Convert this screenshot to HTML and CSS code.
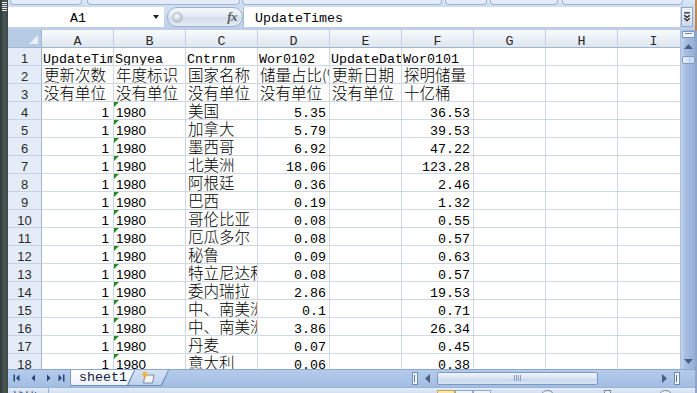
FILE: index.html
```html
<!DOCTYPE html>
<html lang="zh">
<head>
<meta charset="utf-8">
<title>sheet1</title>
<link rel="stylesheet" href="styles.css">
</head>
<body>
<div class="screen">
  <div class="lstrip">
    <svg class="lstrip-icon" width="7" height="11" viewBox="0 0 7 11"><path d="M1 1.5H6M1 3.5H6M1 5.5H6M1 7.5H6M1 9.5H6" stroke="#e8eef0" stroke-width="1"/></svg>
  </div>
  <div class="app">
    <div class="ribbon">
      <span class="grp g1"></span><span class="grp g2"></span><span class="grp g3"></span><span class="grp g4"></span><span class="grp g5"></span><span class="grp g6"></span>
    </div>
    <div class="fbar">
      <div class="namebox"><span class="nb-text">A1</span><span class="nb-arrow"></span></div>
      <div class="fxbtn"><span class="knob"></span><span class="fx">fx</span></div>
      <div class="finput">UpdateTimes</div>
      <div class="fexp"><svg width="11" height="18" viewBox="0 0 11 18"><path d="M2.5 4.5H8.5M2.5 7L5.5 9.5L8.5 7M2.5 10.5L5.5 13L8.5 10.5" fill="none" stroke="#1c1c1c" stroke-width="1.4"/></svg></div>
    </div>
    <div class="main">
      <div class="sheet">
        <div class="corner"></div><div class="ch">A</div><div class="ch">B</div><div class="ch">C</div><div class="ch">D</div><div class="ch">E</div><div class="ch">F</div><div class="ch">G</div><div class="ch">H</div><div class="ch">I</div>

        <div class="rh">1</div><div class="c t">UpdateTimes</div><div class="c t">Sgnyea</div><div class="c t">Cntrnm</div><div class="c t">Wor0102</div><div class="c t">UpdateDate</div><div class="c t">Wor0101</div><div class="c"></div><div class="c"></div><div class="c"></div>

        <div class="rh">2</div><div class="c z">更新次数</div><div class="c z">年度标识</div><div class="c z">国家名称</div><div class="c z">储量占比(%)</div><div class="c z">更新日期</div><div class="c z">探明储量</div><div class="c"></div><div class="c"></div><div class="c"></div>

        <div class="rh">3</div><div class="c z">没有单位</div><div class="c z">没有单位</div><div class="c z">没有单位</div><div class="c z">没有单位</div><div class="c z">没有单位</div><div class="c z">十亿桶</div><div class="c"></div><div class="c"></div><div class="c"></div>

        <div class="rh">4</div><div class="c s r">1</div><div class="c s g">1980</div><div class="c z">美国</div><div class="c n">5.35</div><div class="c"></div><div class="c n">36.53</div><div class="c"></div><div class="c"></div><div class="c"></div>

        <div class="rh">5</div><div class="c s r">1</div><div class="c s g">1980</div><div class="c z">加拿大</div><div class="c n">5.79</div><div class="c"></div><div class="c n">39.53</div><div class="c"></div><div class="c"></div><div class="c"></div>

        <div class="rh">6</div><div class="c s r">1</div><div class="c s g">1980</div><div class="c z">墨西哥</div><div class="c n">6.92</div><div class="c"></div><div class="c n">47.22</div><div class="c"></div><div class="c"></div><div class="c"></div>

        <div class="rh">7</div><div class="c s r">1</div><div class="c s g">1980</div><div class="c z">北美洲</div><div class="c n">18.06</div><div class="c"></div><div class="c n">123.28</div><div class="c"></div><div class="c"></div><div class="c"></div>

        <div class="rh">8</div><div class="c s r">1</div><div class="c s g">1980</div><div class="c z">阿根廷</div><div class="c n">0.36</div><div class="c"></div><div class="c n">2.46</div><div class="c"></div><div class="c"></div><div class="c"></div>

        <div class="rh">9</div><div class="c s r">1</div><div class="c s g">1980</div><div class="c z">巴西</div><div class="c n">0.19</div><div class="c"></div><div class="c n">1.32</div><div class="c"></div><div class="c"></div><div class="c"></div>

        <div class="rh">10</div><div class="c s r">1</div><div class="c s g">1980</div><div class="c z">哥伦比亚</div><div class="c n">0.08</div><div class="c"></div><div class="c n">0.55</div><div class="c"></div><div class="c"></div><div class="c"></div>

        <div class="rh">11</div><div class="c s r">1</div><div class="c s g">1980</div><div class="c z">厄瓜多尔</div><div class="c n">0.08</div><div class="c"></div><div class="c n">0.57</div><div class="c"></div><div class="c"></div><div class="c"></div>

        <div class="rh">12</div><div class="c s r">1</div><div class="c s g">1980</div><div class="c z">秘鲁</div><div class="c n">0.09</div><div class="c"></div><div class="c n">0.63</div><div class="c"></div><div class="c"></div><div class="c"></div>

        <div class="rh">13</div><div class="c s r">1</div><div class="c s g">1980</div><div class="c z">特立尼达和多巴哥</div><div class="c n">0.08</div><div class="c"></div><div class="c n">0.57</div><div class="c"></div><div class="c"></div><div class="c"></div>

        <div class="rh">14</div><div class="c s r">1</div><div class="c s g">1980</div><div class="c z">委内瑞拉</div><div class="c n">2.86</div><div class="c"></div><div class="c n">19.53</div><div class="c"></div><div class="c"></div><div class="c"></div>

        <div class="rh">15</div><div class="c s r">1</div><div class="c s g">1980</div><div class="c z">中、南美洲</div><div class="c n">0.1</div><div class="c"></div><div class="c n">0.71</div><div class="c"></div><div class="c"></div><div class="c"></div>

        <div class="rh">16</div><div class="c s r">1</div><div class="c s g">1980</div><div class="c z">中、南美洲</div><div class="c n">3.86</div><div class="c"></div><div class="c n">26.34</div><div class="c"></div><div class="c"></div><div class="c"></div>

        <div class="rh">17</div><div class="c s r">1</div><div class="c s g">1980</div><div class="c z">丹麦</div><div class="c n">0.07</div><div class="c"></div><div class="c n">0.45</div><div class="c"></div><div class="c"></div><div class="c"></div>

        <div class="rh">18</div><div class="c s r">1</div><div class="c s g">1980</div><div class="c z">意大利</div><div class="c n">0.06</div><div class="c"></div><div class="c n">0.38</div><div class="c"></div><div class="c"></div><div class="c"></div>
      </div>
      <div class="vscroll">
        <div class="vs-split"></div>
        <div class="vs-btn"><svg width="9" height="5" viewBox="0 0 9 5"><path d="M0 5L4.5 0L9 5Z" fill="#4b5f82"/></svg></div>
        <div class="vs-thumb"></div>
        <div class="vs-track"></div>
        <div class="vs-btn"><svg width="9" height="5" viewBox="0 0 9 5"><path d="M0 0L4.5 5L9 0Z" fill="#4b5f82"/></svg></div>
      </div>
    </div>
    <div class="tabbar">
      <div class="nav">
        <svg width="63" height="18" viewBox="0 0 63 18">
          <rect x="5.5" y="5.5" width="1.5" height="7" fill="#24457a"/>
          <path d="M11.5 5.5L8 9L11.5 12.5Z" fill="#24457a"/>
          <path d="M27 5.5L23.5 9L27 12.5Z" fill="#24457a"/>
          <path d="M39 5.5L42.5 9L39 12.5Z" fill="#24457a"/>
          <path d="M50.5 5.5L54 9L50.5 12.5Z" fill="#24457a"/>
          <rect x="55" y="5.5" width="1.5" height="7" fill="#24457a"/>
        </svg>
      </div>
      <div class="tab tab-active"><div class="tab-face">sheet1</div></div>
      <div class="tab tab-add"><div class="tab-face add-face">
        <svg width="16" height="13" viewBox="0 0 16 13"><path d="M5 4H14L12.5 12H3.5Z" fill="#f3f5f9" stroke="#7b8aa2" stroke-width="1"/><circle cx="5" cy="3.5" r="2.2" fill="#f0a02c"/><path d="M5 0V7M1.5 3.5H8.5M2.6 1.1L7.4 5.9M7.4 1.1L2.6 5.9" stroke="#f5b84a" stroke-width="0.8"/></svg>
      </div></div>
      <div class="hscroll">
        <div class="hs-split"></div>
        <div class="hs-btn"><svg width="5" height="9" viewBox="0 0 5 9"><path d="M5 0L0 4.5L5 9Z" fill="#4b5f82"/></svg></div>
        <div class="hs-track"><div class="hs-thumb"><span class="grip"></span><span class="grip"></span><span class="grip"></span><span class="grip"></span></div></div>
        <div class="hs-btn"><svg width="5" height="9" viewBox="0 0 5 9"><path d="M0 0L5 4.5L0 9Z" fill="#4b5f82"/></svg></div>
        <div class="hs-split"></div>
      </div>
    </div>
    <div class="status">
      <span class="st-text">就绪</span>
      <span class="st-sep"></span>
      <span class="vbtn vbtn-on"></span><span class="vbtn"></span><span class="vbtn"></span>
      <span class="st-zoom">100%</span>
      <span class="st-circle"></span>
      <span class="st-mark"></span>
      <span class="st-circle st-circle2"></span>
    </div>
  </div>
  <div class="rstrip"></div>
</div>
</body>
</html>
```
FILE: styles.css
```css
* { box-sizing: border-box; margin: 0; padding: 0; }
html, body { width: 697px; height: 393px; overflow: hidden; }
body { font-family: "Liberation Mono", monospace; background: #3d4a47; color: #000; }

.screen { display: flex; width: 697px; height: 393px; }

.lstrip { width: 8px; flex: none; background: linear-gradient(90deg, #2e3937, #4a5753 55%, #394542); padding: 1px 0 0 1px; }
.lstrip-icon { display: block; }

.app { width: 687px; flex: none; display: flex; flex-direction: column; background: #c1d3ea; }
.rstrip { width: 2px; flex: none; background: linear-gradient(#c98a52 0, #b98356 30px, #8fa6c9 31px, #8fa6c9 100%); }

/* ribbon bottom remnant */
.ribbon { height: 7px; display: flex; align-items: flex-start; background: linear-gradient(#dbe7f6, #cddcf0); }
.grp { display: block; height: 5px; border: 1px solid #9fb5d5; border-top: none; border-radius: 0 0 4px 4px; background: #e3ecf8; }
.g1 { margin-left: 2px; width: 72px; }
.g2 { margin-left: 5px; width: 153px; }
.g3 { margin-left: 2px; width: 200px; }
.g4 { margin-left: 3px; width: 42px; }
.g5 { margin-left: 3px; width: 68px; }
.g6 { margin-left: 4px; width: 121px; }

/* formula bar */
.fbar { height: 23px; display: flex; padding: 0 2px 3px 0; background: linear-gradient(#d4e1f2, #bccee6); }
.namebox { width: 156px; height: 20px; display: flex; align-items: flex-start; background: #fff; margin-right: 3px; }
.nb-text { flex: 1; text-align: center; font-size: 13.33px; line-height: 17px; padding-top: 3px; }
.nb-arrow { width: 16px; height: 20px; display: flex; align-items: center; justify-content: center; }
.nb-arrow::before { content: ""; border-top: 4px solid #222; border-left: 3.5px solid transparent; border-right: 3.5px solid transparent; }
.fxbtn { width: 76px; height: 20px; border: 1px solid #9cb2d2; border-radius: 10px; background: linear-gradient(#f6f9fd, #e2e9f3 50%, #d3dde9 51%, #e4ebf4); display: flex; align-items: center; justify-content: space-between; padding: 0 5px 0 4px; }
.knob { width: 11px; height: 11px; border-radius: 50%; background: radial-gradient(circle at 40% 35%, #ffffff 0, #d8dde4 35%, #a7b0bb 100%); border: 1px solid #b6c0cc; }
.fx { font-family: "Liberation Serif", serif; font-style: italic; font-weight: bold; font-size: 13px; color: #5a5f66; letter-spacing: -0.5px; }
.finput { width: 437px; height: 20px; background: #fff; border-left: 1px solid #a8bcd8; padding: 3px 0 0 11px; font-size: 13.33px; line-height: 17px; }
.fexp { width: 12px; height: 20px; margin-left: 1px; background: linear-gradient(#eef3fa, #cdd9ea); border: 1px solid #8fa8cb; display: flex; align-items: center; justify-content: center; }

/* main grid area */
.main { height: 339px; display: flex; }
.sheet { width: 672px; height: 339px; overflow: hidden; display: grid; grid-template-columns: 34px repeat(9, 72px); grid-auto-rows: 18px; background: #fff; }

.corner { background: #b8cbe5; border-right: 1px solid #9eb6ce; border-bottom: 1px solid #9eb6ce; position: relative; }
.corner::after { content: ""; position: absolute; right: 3px; bottom: 3px; border-bottom: 9px solid #eaf0f8; border-left: 9px solid transparent; }
.ch { background: linear-gradient(#f9fbfd, #eaeff6 55%, #dfe6ef); border-right: 1px solid #c3cfdf; border-bottom: 1px solid #9eb6ce; text-align: center; font-size: 13.33px; line-height: 17px; padding-top: 3px; color: #2a2a2a; overflow: hidden; }
.rh { background: #e4ecf7; border-right: 1px solid #9eb6ce; border-bottom: 1px solid #c5d2e3; text-align: center; font-family: "Liberation Sans", sans-serif; font-size: 13px; line-height: 17px; padding-top: 2px; color: #2a2a2a; overflow: hidden; }

.c { border-right: 1px solid #d0d7e5; border-bottom: 1px solid #d0d7e5; overflow: hidden; white-space: nowrap; position: relative; font-size: 13.33px; line-height: 17px; }
.t { padding: 3px 0 0 1px; }
.n { padding: 3px 3px 0 0; text-align: right; }
.z { font-family: "Noto Sans CJK SC", sans-serif; font-weight: 300; font-size: 15.5px; line-height: 15px; padding: 1px 0 0 2px; }
.s { font-family: "Liberation Sans", sans-serif; font-size: 13.5px; line-height: 17px; padding: 2px 0 0 2px; }
.r { text-align: right; padding-right: 4px; padding-left: 0; }
.g::before { content: ""; position: absolute; left: 0; top: 0; border-top: 5px solid #1e8c1e; border-right: 5px solid transparent; }

/* vertical scrollbar */
.vscroll { width: 15px; height: 339px; display: flex; flex-direction: column; align-items: center; background: linear-gradient(90deg, #c4d5ec 0, #a5bde0 35%, #96b1da 100%); border-left: 1px solid #a9bedc; }
.vs-split { width: 13px; height: 7px; margin-top: 1px; border: 1px solid #7898c6; background: #f3f6fb; position: relative; }
.vs-split::after { content: ""; position: absolute; left: 2px; right: 2px; top: 1px; height: 1px; background: #6d86ad; }
.vs-btn { width: 13px; height: 16px; display: flex; align-items: center; justify-content: center; }
.vs-thumb { width: 13px; height: 8px; margin-top: 2px; border: 1px solid #7e9bc8; border-radius: 2px; background: linear-gradient(90deg, #eef3fa, #d2def0 50%, #bfd0ea 51%, #d7e3f3); }
.vs-track { flex: 1; }

/* sheet tabs + horizontal scrollbar */
.tabbar { height: 18px; display: flex; align-items: flex-start; background: linear-gradient(#b4cbea, #a3bde2); border-top: 1px solid #8aa7d2; }
.nav { width: 63px; height: 17px; border-right: 1px solid #7f9cc8; }
.nav svg { display: block; margin-top: -1px; }
.tab { height: 16px; background: #6d8dbf; }
.tab-active { width: 64px; clip-path: polygon(0 0, 100% 0, calc(100% - 7px) 100%, 0 100%); position: relative; z-index: 2; }
.tab-face { height: 15px; margin: 0 1px 0 0; background: linear-gradient(#ffffff, #eef3fa); clip-path: polygon(0 0, 100% 0, calc(100% - 7px) 100%, 0 100%); font-size: 13.33px; line-height: 15px; padding-left: 8px; color: #10213d; }
.tab-add { width: 42px; margin-left: -8px; clip-path: polygon(7px 0, 100% 0, calc(100% - 7px) 100%, 0 100%); }
.add-face { margin: 0 1px 0 1px; background: linear-gradient(#d5e2f3, #bfd2ec); clip-path: polygon(7px 0, 100% 0, calc(100% - 7px) 100%, 0 100%); padding-left: 12px; display: flex; align-items: center; }
.hscroll { width: 268px; height: 14px; margin: 1px 15px 0 auto; display: flex; align-items: center; }
.hs-split { width: 6px; height: 13px; border: 1px solid #6d8dbf; background: #f3f6fb; position: relative; }
.hs-split::after { content: ""; position: absolute; top: 2px; bottom: 2px; left: 1px; width: 1px; background: #5c7399; }
.hs-btn { width: 19px; height: 13px; display: flex; align-items: center; justify-content: center; }
.hs-track { flex: 1; height: 13px; }
.hs-thumb { width: 161px; height: 13px; border: 1px solid #7b99c6; border-radius: 2px; background: linear-gradient(#f0f4fb, #d8e3f2 50%, #c6d6ed 51%, #dae5f4); display: flex; align-items: center; justify-content: center; gap: 1px; }
.grip { width: 1px; height: 6px; background: #8aa0c2; }

/* status bar */
.status { height: 6px; overflow: hidden; display: flex; align-items: flex-start; background: linear-gradient(#e3ecf8, #d2e0f2); border-top: 1px solid #9ab4d8; }
.st-text { font-family: "Noto Sans CJK SC", sans-serif; font-size: 13px; line-height: 16px; margin: 1px 0 0 3px; color: #1e395b; }
.st-sep { width: 1px; height: 16px; background: #9ab1d1; margin-left: 11px; }
.vbtn { width: 18px; height: 14px; margin-top: 2px; border: 1px solid #8ea7cb; background: linear-gradient(#f1f5fb, #d9e4f2); }
.vbtn-on { margin-left: 388px; background: linear-gradient(#fdeab3, #f7d47e); border-color: #c2a154; }
.st-zoom { font-family: "Liberation Sans", sans-serif; font-size: 12px; line-height: 16px; margin: 2px 0 0 9px; color: #1e395b; }
.st-circle { width: 15px; height: 15px; border-radius: 50%; border: 1px solid #6f86a8; background: #eef3fa; margin: 2px 0 0 9px; }
.st-mark { width: 7px; height: 10px; border: 1px solid #6f86a8; background: #eef3fa; margin: 2px 0 0 49px; }
.st-circle2 { margin-left: 47px; }
```
